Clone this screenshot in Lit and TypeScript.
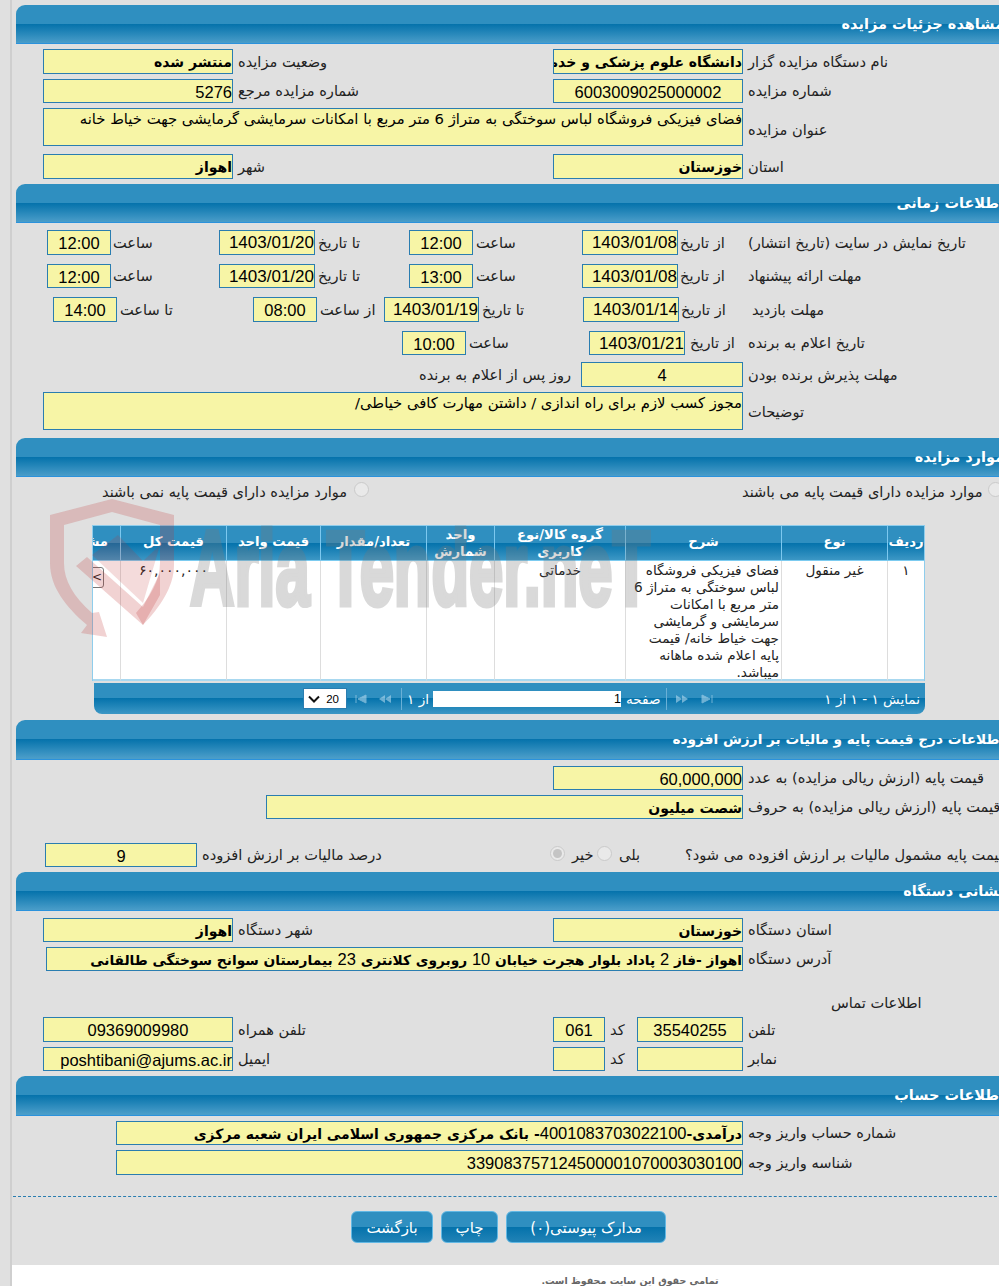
import { LitElement, html, css } from "lit";
import { customElement } from "lit/decorators.js";

@customElement("app-root")
export class AppRoot extends LitElement {
  static styles = css`
    :host { display: block; width: 999px; height: 1286px; overflow: hidden; position: relative; background: #e0e0e0; font-family: "Liberation Sans","DejaVu Sans",sans-serif; color: #111; }
    .page { margin-left: 10px; border-left: 2px solid #cfcfcf; width: 1010px; height: 1286px; }
    .main { height: 1265px; padding-top: 5px; box-sizing: border-box; }
    .hdr { margin-left: 4px; height: 38px; border-bottom: 1px solid #2b92dc; border-top-left-radius: 9px; background: linear-gradient(#2f8fc0 0, #2f8fc0 19px, #0472ab 19px, #4a9dc9 38px); color: #fff; font: bold 14.5px "DejaVu Sans",sans-serif; direction: rtl; line-height: 38px; padding-right: 18px; white-space: nowrap; overflow: hidden; }
    .tall { height: 39px; }
    .hs { font-size: 13.7px; }
    .row { display: grid; align-items: stretch; }
    .h24 { height: 24px; } .h25 { height: 25px; } .h38 { height: 38px; } .h20 { height: 20px; }
    .m4 { margin-top: 4px; } .m5 { margin-top: 5px; } .m6 { margin-top: 6px; } .m7 { margin-top: 7px; } .m8 { margin-top: 8px; } .m9 { margin-top: 9px; } .m22 { margin-top: 22px; } .m24 { margin-top: 24px; }
    .a { padding-left: 31px; grid-template-columns: 190px 320px 190px 1fr; }
    .contact { padding-left: 31px; grid-template-columns: 190px 320px 52px 32px 106px 1fr; }
    .full { padding-left: 31px; grid-template-columns: 700px 1fr; }
    .t1 { padding-left: 35px; grid-template-columns: 64px 108px 96px 94px 64px 109px 96px 65px 1fr; }
    .t3 { padding-left: 41px; grid-template-columns: 64px 136px 64px 67px 95px 104px 96px 64px 1fr; }
    .t4 { padding-left: 390px; grid-template-columns: 64px 123px 96px 58px 1fr; }
    .t5 { padding-left: 0; grid-template-columns: 569px 162px 1fr; }
    .tail { padding-left: 541px; grid-template-columns: 190px 1fr; }
    .base2 { padding-left: 254px; grid-template-columns: 477px 1fr; }
    .tax { padding-left: 33px; grid-template-columns: 152px 353px 15px 32px 15px 73px 1fr; align-items: center; }
    .addr { padding-left: 34px; grid-template-columns: 697px 1fr; }
    .acct { padding-left: 104px; grid-template-columns: 627px 1fr; }
    .ctitle { padding-left: 819px; grid-template-columns: 1fr; }
    .f { box-sizing: border-box; background: #f7f5a6; border: 1px solid #2a7db0; font-size: 16.5px; line-height: 24px; color: #000; direction: rtl; text-align: right; white-space: nowrap; overflow: hidden; min-width: 0; align-self: stretch; height: 100%; }
    .fa { font-family: "DejaVu Sans",sans-serif; font-size: 14px; font-weight: bold; }
    .fs { font-size: 13.75px; }
    .d { font: normal 16.5px "Liberation Sans",sans-serif; }
    .ctr { text-align: center; }
    .ltr { direction: ltr; text-align: right; }
    .ltr.ctr { text-align: center; }
    .date { font-size: 17px; }
    .area { font-family: "DejaVu Sans",sans-serif; font-size: 14.8px; line-height: 19px; white-space: normal; }
    .l { direction: rtl; text-align: left; font-family: "DejaVu Sans",sans-serif; font-size: 14.6px; line-height: 20px; white-space: nowrap; align-self: center; padding-left: 5px; color: #222; }
    .p0 { padding-left: 0; } .p2 { padding-left: 2px; } .p3 { padding-left: 3px; } .p7 { padding-left: 7px; } .p9 { padding-left: 9px; }
    .low { padding-top: 5px; } .low2 { padding-top: 2px; }
    .days { text-align: right; padding-right: 10px; padding-left: 0; }
    .radios { height: 26px; margin-top: 1px; display: grid; grid-template-columns: 90px 252px 15px 373px 243px 3px 15px; align-items: center; }
    .rt { direction: rtl; text-align: left; font-family: "DejaVu Sans",sans-serif; font-size: 14.6px; white-space: nowrap; color: #222; }
    .radio { width: 15px; height: 15px; box-sizing: border-box; border-radius: 50%; background: #e9e9e9; border: 1px solid #cacaca; display: block; margin-bottom: 3px; }
    .on { display: flex; align-items: center; justify-content: center; }
    .on::after { content: ""; width: 9px; height: 9px; border-radius: 50%; background: #c4c4c4; }
    .tbl { margin: 21px 0 0 80px; width: 833px; box-sizing: border-box; border: 1px solid #8fcdec; border-width: 1px 1px 0 1px; display: grid; grid-template-columns: 27px 106px 94px 106px 68px 131px 156px 106px 37px; direction: ltr; }
    .th { height: 35px; padding-bottom: 3px; background: linear-gradient(#2f8fc0 0, #2f8fc0 17px, #0472ab 17px, #3c97c5 34px); color: #fff; font: bold 13.2px/17px "DejaVu Sans",sans-serif; display: flex; align-items: center; justify-content: center; text-align: center; direction: rtl; border-left: 1px solid #7cc8ef; box-sizing: border-box; border-bottom: 1px solid #7ccbf0; overflow: hidden; }
    .th.two { padding-bottom: 0; }
    .th:first-child { border-left: 0; justify-content: flex-start; padding-right: 12px; white-space: nowrap; }
    .td { height: 120px; background: #fff; border-left: 1px solid #ddd; border-bottom: 2px solid #a8d8f0; box-sizing: border-box; direction: rtl; text-align: center; font: 13.6px/17px "DejaVu Sans",sans-serif; color: #222; overflow: hidden; padding: 1px 0 0; }
    .td.first { border-left: 0; display: flex; justify-content: flex-start; direction: ltr; padding-top: 6px; }
    .td.desc { text-align: right; padding-right: 2px; white-space: nowrap; }
    .td.sum { font-size: 14px; }
    .cbtn { width: 14px; height: 21px; margin-left: -3px; box-sizing: border-box; border: 1px solid #777; border-radius: 3px; font-size: 12px; line-height: 18px; text-align: right; padding-right: 1px; color: #222; background: #fff; }
    .pager { margin: 2px 0 0 82px; width: 831px; height: 31px; box-sizing: border-box; border-radius: 0 0 8px 8px; background: linear-gradient(#2f8fc0 0, #2f8fc0 15px, #0472ab 15px, #3c97c5 31px); display: grid; grid-template-columns: 209px 44px 8px 12px 11px 14px 9px 1px 6px 21px 4px 188px 5px 35px 5px 1px 8px 14px 12px 12px 1fr; align-items: center; color: #fff; font: 13.6px "DejaVu Sans",sans-serif; direction: ltr; }
    .sel { grid-column: 2; height: 21px; background: #fff; border: 1px solid #2a7db0; box-sizing: border-box; display: flex; align-items: center; justify-content: space-between; padding: 0 7px 0 4px; color: #000; font: 11.5px "Liberation Sans",sans-serif; }
    .ic { display: block; opacity: .55; }
    .sep { width: 1px; height: 22px; background: #6ab0d6; }
    .pin { height: 16px; background: #fff; color: #000; font: 12.5px/16px "Liberation Sans",sans-serif; text-align: right; }
    .tr { direction: rtl; text-align: left; white-space: nowrap; }
    .pr { text-align: right; padding-right: 5px; direction: rtl; white-space: nowrap; }
    .dash { margin: 21px 0 0 1px; border-top: 1px dashed #2a7db0; }
    .btns { margin: 14px 0 0 339px; display: flex; gap: 8px; }
    .btn { height: 32px; box-sizing: border-box; border: 1px solid #62b8e4; border-radius: 6px; background: linear-gradient(#2f8fc0 0, #2f8fc0 15px, #0472ab 15px, #2585b8 32px); color: #fff; font: 15px/32px "DejaVu Sans",sans-serif; text-align: center; direction: rtl; white-space: nowrap; }
    .w1 { width: 82px; } .w2 { width: 57px; } .w3 { width: 160px; }
    .foot { height: 21px; background: #fff; overflow: hidden; }
    .foot div { margin-left: 529px; width: 178px; direction: rtl; text-align: center; color: #666; font: bold 9.5px/32px "DejaVu Sans",sans-serif; white-space: nowrap; }
    .wm { position: absolute; left: 0; top: 0; width: 999px; height: 1286px; pointer-events: none; overflow: hidden; }
    .shield { position: absolute; left: 40px; top: 495px; }
    .wmt { position: absolute; left: 190px; top: 508px; font: bold 106px/120px "Liberation Sans Narrow","Liberation Sans",sans-serif; color: #787878; opacity: .28; -webkit-text-stroke: 5px #787878; transform: scaleX(.58); transform-origin: left top; white-space: nowrap; }
  `;

  private f(t: string, c = "") {
    const body = c.includes("fa")
      ? t.split(/(\d+)/).map((p, i) => (i % 2 ? html`<span class="d">${p}</span>` : p))
      : t;
    return html`<div class="f ${c}">${body}</div>`;
  }
  private l(t: string, c = "") { return html`<div class="l ${c}">${t}</div>`; }
  private hdr(t: string, m = "") { return html`<div class="hdr ${m}">${t}</div>`; }

  private first() {
    return html`
      ${this.hdr("مشاهده جزئیات مزایده")}
      <div class="row a h25 m5">
        ${this.f("منتشر شده", "fa")}${this.l("وضعیت مزایده")}
        ${this.f("دانشگاه علوم پزشکی و خدمات بهداشتی درمانی اهواز", "fa")}${this.l("نام دستگاه مزایده گزار")}
      </div>
      <div class="row a h24 m5">
        ${this.f("5276", "ltr")}${this.l("شماره مزایده مرجع")}
        ${this.f("6003009025000002", "ltr ctr")}${this.l("شماره مزایده")}
      </div>
      <div class="row full h38 m5">
        ${this.f("فضای فیزیکی فروشگاه لباس سوختگی به متراژ 6 متر مربع با امکانات سرمایشی گرمایشی جهت خیاط خانه", "area")}${this.l("عنوان مزایده", "low")}
      </div>
      <div class="row a h25 m8">
        ${this.f("اهواز", "fa")}${this.l("شهر")}
        ${this.f("خوزستان", "fa")}${this.l("استان")}
      </div>`;
  }

  private times() {
    const dt = "ltr date";
    const tm = "ltr ctr";
    return html`
      ${this.hdr("اطلاعات زمانی", "m5")}
      <div class="row t1 h25 m7">
        ${this.f("12:00", tm)}${this.l("ساعت", "p2")}${this.f("1403/01/20", dt)}${this.l("تا تاریخ", "p3")}
        ${this.f("12:00", tm)}${this.l("ساعت", "p3")}${this.f("1403/01/08", dt)}${this.l("از تاریخ", "p2")}
        ${this.l("تاریخ نمایش در سایت (تاریخ انتشار)")}
      </div>
      <div class="row t1 h24 m9">
        ${this.f("12:00", tm)}${this.l("ساعت", "p2")}${this.f("1403/01/20", dt)}${this.l("تا تاریخ", "p3")}
        ${this.f("13:00", tm)}${this.l("ساعت", "p3")}${this.f("1403/01/08", dt)}${this.l("از تاریخ", "p2")}
        ${this.l("مهلت ارائه پیشنهاد")}
      </div>
      <div class="row t3 h25 m9">
        ${this.f("14:00", tm)}${this.l("تا ساعت", "p3")}${this.f("08:00", tm)}${this.l("از ساعت", "p3")}
        ${this.f("1403/01/19", dt)}${this.l("تا تاریخ", "p3")}${this.f("1403/01/14", dt)}${this.l("از تاریخ", "p2")}
        ${this.l("مهلت بازدید", "p9")}
      </div>
      <div class="row t4 h24 m9">
        ${this.f("10:00", tm)}${this.l("ساعت", "p3")}${this.f("1403/01/21", dt)}${this.l("از تاریخ")}
        ${this.l("تاریخ اعلام به برنده")}
      </div>
      <div class="row t5 h25 m7">
        ${this.l("روز پس از اعلام به برنده", "days")}${this.f("4", tm)}${this.l("مهلت پذیرش برنده بودن")}
      </div>
      <div class="row full h38 m5">
        ${this.f("مجوز کسب لازم برای راه اندازی / داشتن مهارت کافی خیاطی/", "area")}${this.l("توضیحات", "low2")}
      </div>`;
  }

  private items() {
    return html`
      ${this.hdr("موارد مزایده", "m8")}
      <div class="radios">
        <span></span>
        <span class="rt">موارد مزایده دارای قیمت پایه نمی باشند</span>
        <span class="radio"></span>
        <span></span>
        <span class="rt">موارد مزایده دارای قیمت پایه می باشند</span>
        <span></span>
        <span class="radio"></span>
      </div>
      <div class="tbl">
        <div class="th">مشاهده</div>
        <div class="th">قیمت کل</div>
        <div class="th">قیمت واحد</div>
        <div class="th">تعداد/مقدار</div>
        <div class="th two">واحد<br />شمارش</div>
        <div class="th two">گروه کالا/نوع<br />کاربری</div>
        <div class="th">شرح</div>
        <div class="th">نوع</div>
        <div class="th">ردیف</div>
        <div class="td first"><div class="cbtn">&lt;</div></div>
        <div class="td sum">۶۰,۰۰۰,۰۰۰</div>
        <div class="td"></div>
        <div class="td"></div>
        <div class="td"></div>
        <div class="td">خدماتی</div>
        <div class="td desc">فضای فیزیکی فروشگاه<br />لباس سوختگی به متراژ 6<br />متر مربع با امکانات<br />سرمایشی و گرمایشی<br />جهت خیاط خانه/ قیمت<br />پایه اعلام شده ماهانه<br />میباشد.</div>
        <div class="td">غیر منقول</div>
        <div class="td">۱</div>
      </div>
      <div class="pager">
        <span></span>
        <div class="sel">
          <svg width="12" height="8" viewBox="0 0 12 8"><path d="M1 1.5 6 6.5 11 1.5" fill="none" stroke="#111" stroke-width="2"/></svg>
          <span>20</span>
        </div>
        <span></span>
        <svg class="ic" width="12" height="10" viewBox="0 0 12 10"><path d="M1 1v8M11 1v8L3 5z" fill="#bfe0f2" stroke="#bfe0f2" stroke-width="1"/></svg>
        <span></span>
        <svg class="ic" width="14" height="10" viewBox="0 0 14 10"><path d="M7 1v8L1 5zM13 1v8L7 5z" fill="#bfe0f2"/></svg>
        <span></span>
        <div class="sep"></div>
        <span></span>
        <div class="tr">از ۱</div>
        <span></span>
        <div class="pin">1</div>
        <span></span>
        <div class="tr">صفحه</div>
        <span></span>
        <div class="sep"></div>
        <span></span>
        <svg class="ic" width="14" height="10" viewBox="0 0 14 10"><path d="M1 1v8l6-4zM7 1v8l6-4z" fill="#bfe0f2"/></svg>
        <span></span>
        <svg class="ic" width="12" height="10" viewBox="0 0 12 10"><path d="M1 1v8l8-4zM11 1v8" fill="#bfe0f2" stroke="#bfe0f2" stroke-width="1"/></svg>
        <div class="pr">نمایش ۱ - ۱ از ۱</div>
      </div>`;
  }

  private price() {
    return html`
      ${this.hdr("اطلاعات درج قیمت پایه و مالیات بر ارزش افزوده", "m6 tall hs")}
      <div class="row tail h24 m6">
        ${this.f("60,000,000", "ltr")}${this.l("قیمت پایه (ارزش ریالی مزایده) به عدد")}
      </div>
      <div class="row base2 h24 m5">
        ${this.f("شصت میلیون", "fa")}${this.l("قیمت پایه (ارزش ریالی مزایده) به حروف")}
      </div>
      <div class="row tax h24 m24">
        ${this.f("9", "ltr ctr")}${this.l("درصد مالیات بر ارزش افزوده")}
        <span class="radio on"></span>${this.l("خیر", "p7")}
        <span class="radio"></span>${this.l("بلی", "p7")}
        ${this.l("قیمت پایه مشمول مالیات بر ارزش افزوده می شود؟", "p0")}
      </div>`;
  }

  private office() {
    return html`
      ${this.hdr("نشانی دستگاه", "m5")}
      <div class="row a h24 m7">
        ${this.f("اهواز", "fa")}${this.l("شهر دستگاه")}
        ${this.f("خوزستان", "fa")}${this.l("استان دستگاه")}
      </div>
      <div class="row addr h24 m5">
        ${this.f("اهواز -فاز 2 پاداد بلوار هجرت خیابان 10 روبروی کلانتری 23 بیمارستان سوانح سوختگی طالقانی", "fa fs")}${this.l("آدرس دستگاه")}
      </div>
      <div class="row ctitle h20 m22">${this.l("اطلاعات تماس", "p0")}</div>
      <div class="row contact h25 m4">
        ${this.f("09369009980", "ltr ctr")}${this.l("تلفن همراه")}
        ${this.f("061", "ltr ctr")}${this.l("کد")}
        ${this.f("35540255", "ltr ctr")}${this.l("تلفن")}
      </div>
      <div class="row contact h24 m5">
        ${this.f("poshtibani@ajums.ac.ir", "ltr")}${this.l("ایمیل")}
        ${this.f("")}${this.l("کد")}
        ${this.f("")}${this.l("نمابر")}
      </div>`;
  }

  private account() {
    return html`
      ${this.hdr("اطلاعات حساب", "m5 tall")}
      <div class="row acct h24 m5">
        ${this.f("درآمدی-4001083703022100- بانک مرکزی جمهوری اسلامی ایران شعبه مرکزی", "fa")}${this.l("شماره حساب واریز وجه")}
      </div>
      <div class="row acct h25 m5">
        ${this.f("339083757124500001070003030100", "ltr")}${this.l("شناسه واریز وجه")}
      </div>`;
  }

  render() {
    return html`
      <div class="page">
        <div class="main">
          ${this.first()}${this.times()}${this.items()}${this.price()}${this.office()}${this.account()}
          <div class="dash"></div>
          <div class="btns">
            <div class="btn w1">بازگشت</div>
            <div class="btn w2">چاپ</div>
            <div class="btn w3">مدارک پیوستی(۰)</div>
          </div>
        </div>
        <div class="foot"><div>تمامی حقوق این سایت محفوظ است.</div></div>
      </div>
      <div class="wm">
        <svg class="shield" width="150" height="150" viewBox="0 0 150 150">
          <g fill="rgba(190,50,50,.22)">
            <path fill-rule="evenodd" d="M10 20 72 4 134 20V70C134 92 120 112 103 130L96 118C110 102 120 86 120 68V30L72 17 24 30V68C24 86 34 102 52 118L59 117 67 142 41 138 47 130C26 112 10 92 10 68Z"/>
            <path d="M36 71 47 62 103 112 120 78V100L103 130Z"/>
            <path d="M52 60 78 40 103 66 120 50 103 108Z" opacity=".8"/>
          </g>
        </svg>
        <div class="wmt">Aria Tender.neT</div>
      </div>`;
  }
}
